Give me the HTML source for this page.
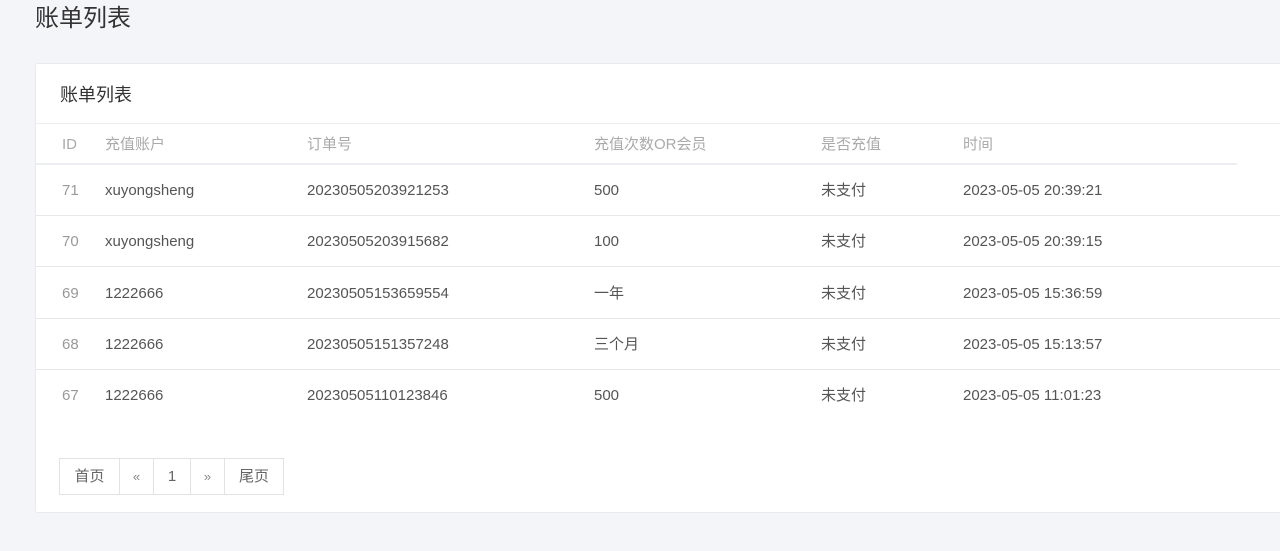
<!DOCTYPE html>
<html><head><meta charset="utf-8"><style>
*{margin:0;padding:0;box-sizing:border-box}
body{width:1280px;height:551px;background:#f4f5f8;font-family:"Liberation Sans","Noto Sans CJK SC",sans-serif;position:relative;overflow:hidden;color:#555}
.t{position:absolute;left:35px;top:3px;font-size:24px;line-height:32px;color:#333}
.card{position:absolute;left:35px;top:63px;width:1260px;height:450px;background:#fff;border:1px solid #e8e9ec;border-radius:3px}
.ch{position:absolute;left:0;top:0;width:100%;height:60px;border-bottom:1px solid #ebedf0;font-size:18px;line-height:62px;padding-left:24px;color:#333}
.c{position:absolute;font-size:15px;line-height:20px;height:20px;white-space:nowrap}
.hl{position:absolute;left:0;top:99px;width:1201px;height:2px;background:#eceef1}
.rl{position:absolute;left:0;width:100%;height:1px;background:#e6e8eb}
.pg{position:absolute;left:23px;top:394px;height:37px;display:flex;border:1px solid #e2e2e2}
.pg div{border-left:1px solid #e2e2e2;font-size:15px;color:#666;line-height:35px;height:35px;text-align:center}
.pg div:first-child{border-left:none}
</style></head><body>
<div class="t">账单列表</div>
<div class="card">
<div class="ch">账单列表</div>
<div class="hl"></div>
<div class="c" style="left:26px;top:71px;color:#aaa">ID</div>
<div class="c" style="left:69px;top:71px;color:#aaa">充值账户</div>
<div class="c" style="left:271px;top:71px;color:#aaa">订单号</div>
<div class="c" style="left:558px;top:71px;color:#aaa">充值次数OR会员</div>
<div class="c" style="left:785px;top:71px;color:#aaa">是否充值</div>
<div class="c" style="left:927px;top:71px;color:#aaa">时间</div>

<div class="c" style="left:26px;top:117px;color:#999">71</div>
<div class="c" style="left:69px;top:117px">xuyongsheng</div>
<div class="c" style="left:271px;top:117px">20230505203921253</div>
<div class="c" style="left:558px;top:117px">500</div>
<div class="c" style="left:785px;top:117px">未支付</div>
<div class="c" style="left:927px;top:117px">2023-05-05 20:39:21</div>
<div class="rl" style="top:151px"></div>

<div class="c" style="left:26px;top:168px;color:#999">70</div>
<div class="c" style="left:69px;top:168px">xuyongsheng</div>
<div class="c" style="left:271px;top:168px">20230505203915682</div>
<div class="c" style="left:558px;top:168px">100</div>
<div class="c" style="left:785px;top:168px">未支付</div>
<div class="c" style="left:927px;top:168px">2023-05-05 20:39:15</div>
<div class="rl" style="top:202px"></div>

<div class="c" style="left:26px;top:220px;color:#999">69</div>
<div class="c" style="left:69px;top:220px">1222666</div>
<div class="c" style="left:271px;top:220px">20230505153659554</div>
<div class="c" style="left:558px;top:220px">一年</div>
<div class="c" style="left:785px;top:220px">未支付</div>
<div class="c" style="left:927px;top:220px">2023-05-05 15:36:59</div>
<div class="rl" style="top:254px"></div>

<div class="c" style="left:26px;top:271px;color:#999">68</div>
<div class="c" style="left:69px;top:271px">1222666</div>
<div class="c" style="left:271px;top:271px">20230505151357248</div>
<div class="c" style="left:558px;top:271px">三个月</div>
<div class="c" style="left:785px;top:271px">未支付</div>
<div class="c" style="left:927px;top:271px">2023-05-05 15:13:57</div>
<div class="rl" style="top:305px"></div>

<div class="c" style="left:26px;top:322px;color:#999">67</div>
<div class="c" style="left:69px;top:322px">1222666</div>
<div class="c" style="left:271px;top:322px">20230505110123846</div>
<div class="c" style="left:558px;top:322px">500</div>
<div class="c" style="left:785px;top:322px">未支付</div>
<div class="c" style="left:927px;top:322px">2023-05-05 11:01:23</div>

<div class="pg">
<div style="width:59px">首页</div>
<div style="width:34px;font-size:13px;color:#888">«</div>
<div style="width:37px">1</div>
<div style="width:34px;font-size:13px;color:#888">»</div>
<div style="width:59px">尾页</div>
</div>
</div>
</body></html>
